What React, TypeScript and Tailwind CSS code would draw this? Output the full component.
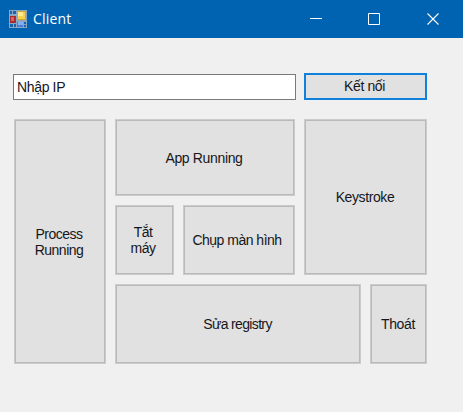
import type { ReactNode } from 'react';

function Tile({ className, children }: { className: string; children: ReactNode }) {
  return (
    <button
      className={`flex shrink-0 items-center justify-center border border-[#cbcbcb] bg-[#e1e1e1] p-px text-center leading-4 whitespace-nowrap shadow-[inset_0_0_0_1px_#b9b9b9] ${className}`}
    >
      {children}
    </button>
  );
}

function FormIcon() {
  return (
    <svg width="18" height="18" viewBox="0 0 18 18">
      <rect width="18" height="18" fill="#8ba6bf" />
      <path d="M1 1h2v3H1zM4 1h3v3H4zM1 14h3v3H1zM5 14h2v3H5zM15 12h2v2h-2zM15 15h2v2h-2z" fill="#1766ad" />
      <rect x="8" y="1" width="9" height="9" fill="#d9a52c" />
      <rect x="9" y="2" width="7" height="7" fill="#f7d04e" />
      <rect x="9" y="2" width="5" height="4" fill="#ffe98e" />
      <rect x="1" y="6" width="6" height="7" fill="#a92b32" />
      <rect x="2" y="7" width="3" height="4" fill="#db6259" />
      <rect x="8" y="12" width="6" height="5" fill="#477fdc" />
      <rect x="9" y="12" width="5" height="3" fill="#83aff4" />
    </svg>
  );
}

export default function App() {
  return (
    <div className="h-[412px] w-[463px] bg-[#f0f0f0] font-['Liberation_Sans',Arial,sans-serif] text-[14px] text-[#16161c]">
      <header className="flex h-[38px] items-center bg-[#0063b1] pl-[9px] text-white">
        <FormIcon />
        <span className="mb-px ml-[6px] font-['Open_Sans','Noto_Sans',sans-serif] text-[14px] tracking-[0.2px]">Client</span>
        <svg className="ml-auto" width="173" height="38" viewBox="0 0 173 38" fill="none" stroke="white">
          <path d="M20 18.5h12" />
          <path d="M78.5 13.5h11v11h-11z" />
          <path d="m137.5 13.5 11 11m0-11-11 11" strokeWidth="1.1" />
        </svg>
      </header>
      <main className="pl-[13px] pt-[35px]">
        <div className="flex items-center gap-2">
          <input
            className="mt-px h-[26px] w-[283px] border border-[#7a7a7a] bg-white pb-px pl-[3px] tracking-[-0.35px] outline-none"
            defaultValue="Nhập IP"
          />
          <button className="h-[27px] w-[123px] border-2 border-[#0f80dc] bg-[#e1e1e1] pr-[2px] tracking-[-0.4px]">
            Kết nối
          </button>
        </div>
        <div className="ml-px mt-[19px] flex gap-[9px]">
          <Tile className="h-[245px] w-[92px] pr-[3px] tracking-[-0.5px]">
            Process
            <br />
            Running
          </Tile>
          <div className="flex flex-col gap-[9px]">
            <div className="flex gap-[9px]">
              <div className="flex flex-col gap-[9px]">
                <Tile className="h-[77px] w-[180px] pr-[3px] tracking-[-0.35px]">App Running</Tile>
                <div className="flex gap-[9px]">
                  <Tile className="h-[70px] w-[59px] pr-[4px] tracking-[-0.55px]">
                    Tắt
                    <br />
                    máy
                  </Tile>
                  <Tile className="h-[70px] w-[112px] pr-[5px] tracking-[-0.5px]">Chụp màn hình</Tile>
                </div>
              </div>
              <Tile className="h-[156px] w-[123px] pr-[2px] tracking-[-0.4px]">Keystroke</Tile>
            </div>
            <div className="flex gap-[9px]">
              <Tile className="h-[80px] w-[246px] pr-[2px] tracking-[-0.65px]">Sửa registry</Tile>
              <Tile className="h-[80px] w-[57px] pr-[2px] tracking-[-0.35px]">Thoát</Tile>
            </div>
          </div>
        </div>
      </main>
    </div>
  );
}
